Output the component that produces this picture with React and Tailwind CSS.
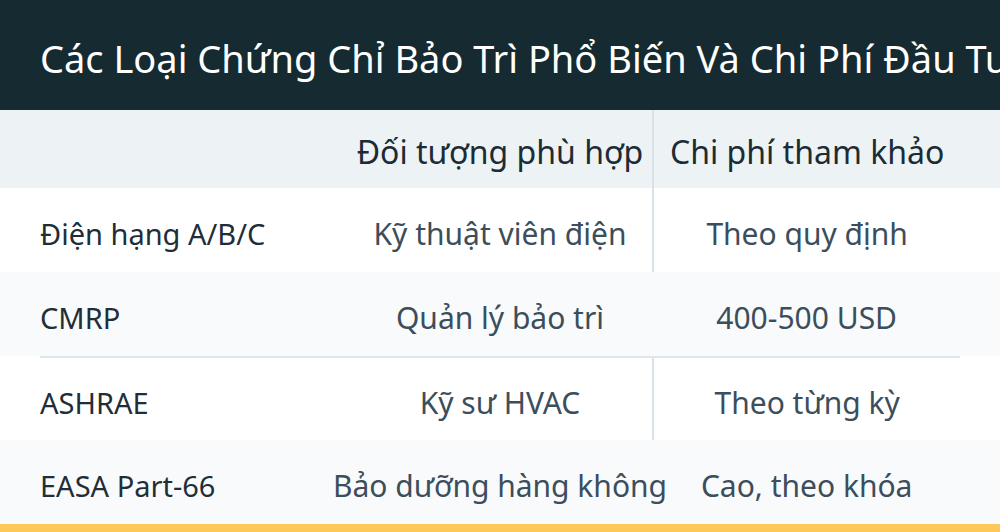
const rows = [
  { name: "Điện hạng A/B/C", target: "Kỹ thuật viên điện", cost: "Theo quy định", light: false },
  { name: "CMRP", target: "Quản lý bảo trì", cost: "400-500 USD", light: true },
  { name: "ASHRAE", target: "Kỹ sư HVAC", cost: "Theo từng kỳ", light: false, topLine: true },
  { name: "EASA Part-66", target: "Bảo dưỡng hàng không", cost: "Cao, theo khóa", light: true },
];

export default function App() {
  return (
    <div
      className="w-[1000px] h-[532px] overflow-hidden bg-white flex flex-col"
      style={{ fontFamily: '"Noto Sans", "Open Sans", sans-serif' }}
    >
      <div className="h-[110px] shrink-0 bg-[#152a31] flex items-center pl-10 pt-[6px] whitespace-nowrap overflow-hidden">
        <h1 className="text-[38px] text-white font-normal leading-none">
          Các Loại Chứng Chỉ Bảo Trì Phổ Biến Và Chi Phí Đầu Tư
        </h1>
      </div>

      <div className="h-[78px] shrink-0 bg-[#edf2f5] px-10 grid grid-cols-3">
        <div />
        <div className="flex items-center justify-center pt-[6px] text-[32px] text-[#1b2c34] whitespace-nowrap">
          Đối tượng phù hợp
        </div>
        <div className="flex items-center justify-center pt-[6px] -ml-[1px] text-[32px] text-[#1b2c34] border-l-2 border-[#d9e3e7] whitespace-nowrap">
          Chi phí tham khảo
        </div>
      </div>

      {rows.map((r) => (
        <div key={r.name} className={`shrink-0 ${r.light ? "bg-[#f8fafb]" : "bg-white"}`}>
          <div className="px-10">
            {r.topLine && <div className="h-[2px] bg-[#dde6eb]" />}
            <div className={`grid grid-cols-3 whitespace-nowrap ${r.topLine ? "h-[82px]" : "h-[84px]"}`}>
              <div className="flex items-center pt-[7px] text-[29px] text-[#1f2e37]">{r.name}</div>
              <div className="flex items-center justify-center pt-[7px] text-[30px] text-[#3c4e5b]">
                {r.target}
              </div>
              <div
                className={`flex items-center justify-center pt-[7px] text-[30px] text-[#3c4e5b] ${
                  r.light ? "" : "-ml-[1px] border-l-2 border-[#d9e3e7]"
                }`}
              >
                {r.cost}
              </div>
            </div>
          </div>
        </div>
      ))}

      <div className="h-[8px] shrink-0 bg-[#fdc857]" />
    </div>
  );
}
